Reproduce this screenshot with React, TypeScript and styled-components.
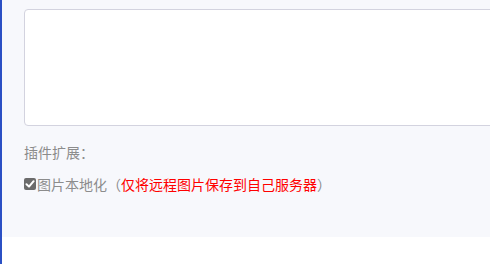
import React from "react";
import styled, { createGlobalStyle } from "styled-components";

const Global = createGlobalStyle`
  html, body { margin: 0; padding: 0; background: #fff; }
  body { font-family: "Microsoft YaHei", "Noto Sans CJK SC", "Noto Sans", sans-serif; }
`;

const Page = styled.div`
  display: flex;
  height: 264px;
  width: 491px;
  overflow: hidden;
`;

const SideBar = styled.div`
  width: 2px;
  flex: none;
  background: #2b50c4;
`;

const Main = styled.div`
  flex: 1;
  display: flex;
  flex-direction: column;
  background: #fff;
`;

const Panel = styled.div`
  width: 488px;
  height: 237px;
  box-sizing: border-box;
  background: #f7f8fc;
  padding: 9px 0 0 22px;
  overflow: hidden;
  display: flex;
  flex-direction: column;
`;

const TextArea = styled.textarea`
  display: block;
  width: 520px;
  height: 117px;
  box-sizing: border-box;
  border: 1px solid #d3d3df;
  border-radius: 4px;
  background: #fff;
  resize: none;
  outline: none;
  flex: none;
`;

const SectionLabel = styled.div`
  margin-top: 16px;
  font-size: 14px;
  line-height: 20px;
  color: #8c8c8c;
`;

const OptionRow = styled.label`
  margin-top: 12px;
  display: flex;
  align-items: center;
  font-size: 14px;
  line-height: 20px;
  color: #8c8c8c;
  white-space: nowrap;
`;

const CheckBox = styled.span`
  width: 12px;
  height: 12px;
  margin-top: -1px;
  border-radius: 2px;
  background: #6b6b6b;
  display: inline-flex;
  align-items: center;
  justify-content: center;
  flex: none;
  margin-right: 1px;
`;

const Note = styled.span<{ $tone?: "red" | "gray" }>`
  color: ${(p) => (p.$tone === "red" ? "#ff0000" : "#8c8c8c")};
`;

export default function App() {
  return (
    <>
      <Global />
      <Page>
        <SideBar />
        <Main>
          <Panel>
            <TextArea />
            <SectionLabel>插件扩展：</SectionLabel>
            <OptionRow>
              <CheckBox role="checkbox" aria-checked="true">
                <svg width="10" height="10" viewBox="0 0 10 10">
                  <path d="M1.5 5.2 L4 7.6 L8.6 2.2" fill="none" stroke="#fff" strokeWidth="2" strokeLinecap="round" strokeLinejoin="round" />
                </svg>
              </CheckBox>
              <Note>图片本地化（</Note>
              <Note $tone="red">仅将远程图片保存到自己服务器</Note>
              <Note>）</Note>
            </OptionRow>
          </Panel>
        </Main>
      </Page>
    </>
  );
}
